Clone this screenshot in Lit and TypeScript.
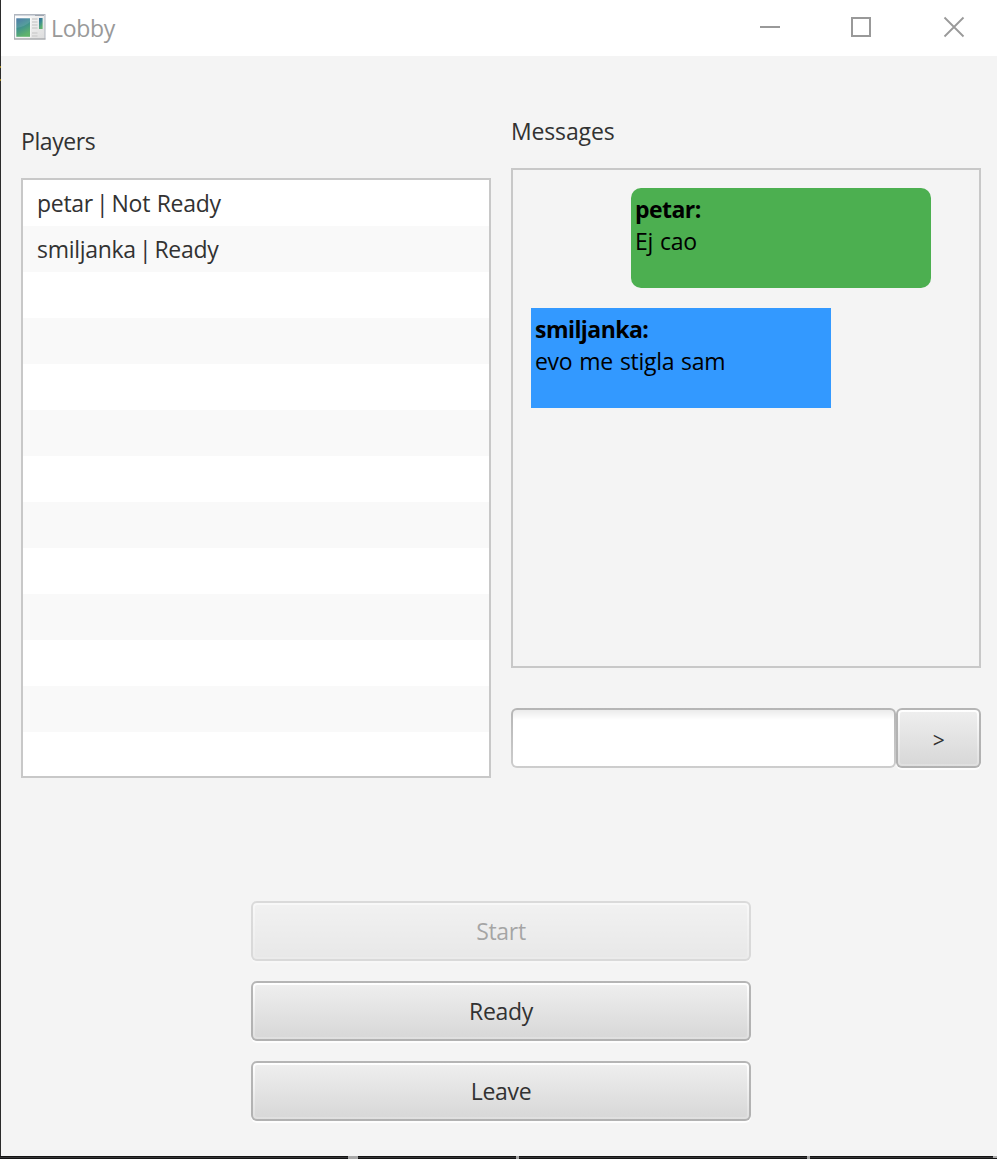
import { LitElement, html, css } from "lit";
import { customElement, property } from "lit/decorators.js";
import { classMap } from "lit/directives/class-map.js";

@customElement("fx-button")
class FxButton extends LitElement {
  @property() label = "";
  @property({ type: Boolean, reflect: true }) disabled = false;

  static styles = css`
    :host { display: block; height: 60px; }
    :host([disabled]) { opacity: 0.4; }
    .edge {
      box-sizing: border-box; width: 100%; height: 60px; padding: 2px; border: 0; display: block;
      border-radius: 6px; background: linear-gradient(#b5b5b5, #b1b1b1);
      box-shadow: 0 2px 0 #fdfdfd;
      font: inherit; letter-spacing: inherit; color: #323232;
    }
    .rim {
      box-sizing: border-box; display: block; height: 56px; padding: 2px; border-radius: 4px;
      background: linear-gradient(#ffffff, #fdfdfd 5%, #dfdfdf);
    }
    .face {
      display: flex; align-items: center; justify-content: center; height: 52px;
      border-radius: 2px; background: linear-gradient(#eeeeee, #d8d8d8); line-height: 32px;
    }
    .text { display: block; }
    .text.symbol { padding-top: 3px; font-size: 21px; }
  `;

  render() {
    return html`<button class="edge" ?disabled=${this.disabled}>
      <span class="rim"><span class="face"><span class=${classMap({ text: true, symbol: this.label.length === 1 })}>${this.label}</span></span></span>
    </button>`;
  }
}

interface Player { name: string; status: string; }
interface Message { from: string; text: string; own: boolean; }

@customElement("app-root")
class AppRoot extends LitElement {
  players: Player[] = [
    { name: "petar", status: "Not Ready" },
    { name: "smiljanka", status: "Ready" },
  ];
  messages: Message[] = [
    { from: "petar:", text: "Ej cao", own: true },
    { from: "smiljanka:", text: "evo me stigla sam", own: false },
  ];

  static styles = css`
    :host {
      display: block; box-sizing: border-box; width: 997px; height: 1159px; padding: 0 0 3px 1px;
      background:
        linear-gradient(#9c8220, #9c8220) 0 66px / 1px 2px no-repeat,
        linear-gradient(#9c8220, #9c8220) 0 79px / 1px 2px no-repeat,
        linear-gradient(#a8a8a8, #a8a8a8) 348px 1156px / 10px 3px no-repeat,
        linear-gradient(#a8a8a8, #a8a8a8) 516px 1156px / 3px 3px no-repeat,
        linear-gradient(#a8a8a8, #a8a8a8) 807px 1156px / 3px 3px no-repeat,
        linear-gradient(#a8a8a8, #a8a8a8) 993px 1156px / 4px 2px no-repeat,
        linear-gradient(#131313, #131313) 0 1156px / 100% 1px no-repeat,
        linear-gradient(#343436, #343436) 0 1157px / 100% 1px no-repeat,
        linear-gradient(#131313, #131313) 0 1158px / 100% 1px no-repeat, #2b2b2b;
      font: 23px/32px "Open Sans", "Noto Sans", sans-serif; letter-spacing: -0.3px; color: #323232;
      overflow: hidden;
    }
    .window { display: flex; flex-direction: column; height: 1156px; background: #f4f4f4; }
    .titlebar { display: flex; height: 56px; background: #fff; color: #999; flex: none; }
    .appicon { display: block; margin: 14px 5px 0 13px; }
    .title { flex: 1; padding-top: 12px; }
    .controls { display: block; }
    .columns { display: grid; grid-template-columns: 470px 470px; column-gap: 20px; padding-left: 20px; height: 722px; }
    .players { padding-top: 69px; }
    .messages { padding-top: 59px; }
    .heading { height: 53px; }
    .players .heading { letter-spacing: -0.4px; }
    .messages .heading { letter-spacing: -0.15px; }
    .list {
      box-sizing: border-box; height: 600px; border: 2px solid #c8c8c8;
      background: repeating-linear-gradient(#fff 0 46px, #f9f9f9 46px 92px);
    }
    .row { height: 46px; padding: 7px 14px 0; box-sizing: border-box; word-spacing: 1px; }
    .divider { margin: 0 -3.5px; }
    .chat {
      box-sizing: border-box; height: 500px; border: 2px solid #c8c8c8; padding: 18px 48px 0 18px;
      display: flex; flex-direction: column; gap: 20px;
    }
    .bubble { box-sizing: border-box; width: 300px; height: 100px; padding: 5px 4px; background: #3399ff; color: #000; }
    .bubble.own { align-self: flex-end; background: #4caf50; border-radius: 10px; }
    .from { font-weight: 700; letter-spacing: -0.55px; }
    .body { word-spacing: 1.3px; }
    .compose { display: grid; grid-template-columns: 385px 85px; margin-top: 40px; }
    .field { box-sizing: border-box; height: 60px; padding: 2px; border-radius: 6px; background: linear-gradient(#b5b5b5, #cdcdcd); }
    .input {
      display: block; box-sizing: border-box; width: 100%; height: 56px; border: 0; padding: 0 12px; outline: 0;
      border-radius: 4px; background: linear-gradient(#ebebeb, #fff 10px); font: inherit;
    }
    .actions { display: flex; flex-direction: column; gap: 20px; width: 500px; margin: 123px 0 0 250px; }
  `;

  render() {
    return html`
      <div class="window">
        <header class="titlebar">
          <svg class="appicon" width="32" height="26" viewBox="0 0 32 26">
            <defs>
              <linearGradient id="pane" x1="0" y1="0" x2="0.4" y2="1">
                <stop offset="0" stop-color="#35699c" /><stop offset="0.5" stop-color="#3f8f90" /><stop offset="1" stop-color="#5fb36c" />
              </linearGradient>
              <linearGradient id="shell" x1="0" y1="0" x2="1" y2="1">
                <stop offset="0" stop-color="#ffffff" /><stop offset="1" stop-color="#dcdcdc" />
              </linearGradient>
            </defs>
            <rect x="0.5" y="0.5" width="30.5" height="24.500" fill="url(#shell)" stroke="#b0b6bf" />
            <path d="M0 25h31.500" stroke="#a8a8a8" />
            <path d="M1 1.500h21" stroke="#d0d5dc" /><path d="M21 1.500h9" stroke="#a0a6b0" />
            <rect x="1.500" y="3.500" width="15" height="20" fill="#fff" />
            <rect x="2.300" y="4.300" width="13.700" height="18.500" fill="url(#pane)" />
            <path d="M2.300 14q8-1 13.700-6V4.300H2.300z" fill="#fff" opacity="0.12" />
            <path d="M18 5h5.500M18 8h5.500M18 11h5.500M18 14h5.500M18 19h5.500M18 22h5.500" stroke="#cfcfcf" stroke-width="1.300" />
            <rect x="25" y="4" width="3.600" height="11" fill="url(#pane)" />
          </svg>
          <div class="title">Lobby</div>
          <svg class="controls" width="238" height="56" viewBox="759 0 238 56" fill="none" stroke="#999" stroke-width="2">
            <path d="M760 27h20" />
            <rect x="852" y="18" width="18" height="18" />
            <path d="M944.500 17.500l19 19M963.500 17.500l-19 19" stroke-width="1.800" />
          </svg>
        </header>
        <div class="columns">
          <section class="players">
            <div class="heading">Players</div>
            <div class="list">
              ${this.players.map((p) => html`<div class="row">${p.name} <span class="divider">|</span> ${p.status}</div>`)}
            </div>
          </section>
          <section class="messages">
            <div class="heading">Messages</div>
            <div class="chat">
              ${this.messages.map((m) => html`<div class=${classMap({ bubble: true, own: m.own })}>
                <div class="from">${m.from}</div><div class="body">${m.text}</div>
              </div>`)}
            </div>
            <div class="compose">
              <div class="field"><input class="input" /></div>
              <fx-button label=">"></fx-button>
            </div>
          </section>
        </div>
        <div class="actions">
          <fx-button label="Start" disabled></fx-button>
          <fx-button label="Ready"></fx-button>
          <fx-button label="Leave"></fx-button>
        </div>
      </div>
    `;
  }
}
